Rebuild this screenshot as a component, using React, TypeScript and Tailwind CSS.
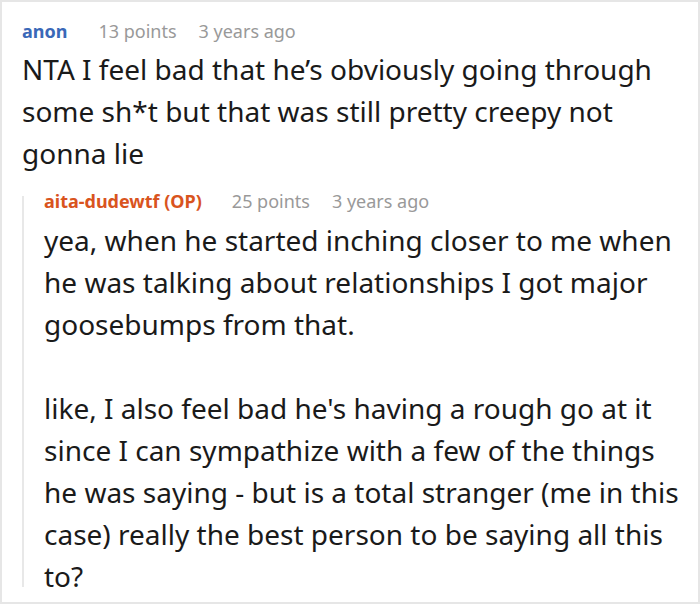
export default function App() {
  return (
    <div
      className="w-[700px] h-[604px] border-2 border-[#e6e6e6] bg-white overflow-hidden pl-5 pr-[12px] pt-[17px]"
      style={{ fontFamily: '"Noto Sans", "Open Sans", sans-serif' }}
    >
      <div className="flex items-center text-[18px] leading-6">
        <span className="font-bold text-[#3a68b8]">anon</span>
        <span className="ml-[31px] text-[#999999]">13 points</span>
        <span className="ml-[22px] text-[#999999]">3 years ago</span>
      </div>
      <p className="mt-[5px] text-[28px] leading-[42px] text-[#1a1a1a]">
        NTA I feel bad that he’s obviously going through some sh*t but that was still pretty creepy not gonna lie
      </p>
      <div className="mt-[15px] flex">
        <div className="w-0.5 bg-[#e8e8e8] mt-[7px] mb-[10px] shrink-0" />
        <div className="pl-5">
          <div className="flex items-center text-[18px] leading-6">
            <span className="font-bold text-[#d9541e]">aita-dudewtf (OP)</span>
            <span className="ml-[30px] text-[#999999]">25 points</span>
            <span className="ml-[22px] text-[#999999]">3 years ago</span>
          </div>
          <div className="mt-[6px] text-[28px] leading-[42px] text-[#1a1a1a]">
            <p>
              yea, when he started inching closer to me when he was talking about relationships I got major goosebumps from that.
            </p>
            <p className="mt-[42px]">
              like, I also feel bad he's having a rough go at it since I can sympathize with a few of the things he was saying - but is a total stranger (me in this case) really the best person to be saying all this to?
            </p>
          </div>
        </div>
      </div>
    </div>
  );
}
